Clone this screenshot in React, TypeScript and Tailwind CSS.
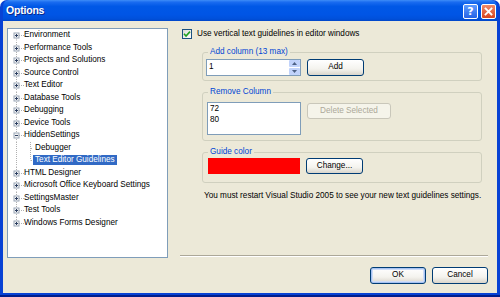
import React from 'react'

const font = "font-['Liberation_Sans',Arial,sans-serif]"

type Node = { label: string; child?: boolean; expanded?: boolean; selected?: boolean; lastChild?: boolean }

const nodes: Node[] = [
  { label: 'Environment' },
  { label: 'Performance Tools' },
  { label: 'Projects and Solutions' },
  { label: 'Source Control' },
  { label: 'Text Editor' },
  { label: 'Database Tools' },
  { label: 'Debugging' },
  { label: 'Device Tools' },
  { label: 'HiddenSettings', expanded: true },
  { label: 'Debugger', child: true },
  { label: 'Text Editor Guidelines', child: true, selected: true, lastChild: true },
  { label: 'HTML Designer' },
  { label: 'Microsoft Office Keyboard Settings' },
  { label: 'SettingsMaster' },
  { label: 'Test Tools' },
  { label: 'Windows Forms Designer' },
]

function TreeGutter({ first, last, child, expanded }: { first: boolean; last: boolean; child?: boolean; expanded?: boolean }) {
  return (
    <svg width="16" height="12.5" className="shrink-0">
      <line x1="8.5" x2="8.5" y1={first ? 6.5 : 0} y2={last ? 6.5 : 12.5} stroke="#B0B0B0" strokeDasharray="1 1" />
      {!child && (
        <>
          <line x1="11" x2="16" y1="6.5" y2="6.5" stroke="#B0B0B0" strokeDasharray="1 1" />
          <rect x="6" y="4" width="5" height="5" fill="#F4F4F4" stroke="#9AA6B6" />
          <line x1="7" x2="10" y1="6.5" y2="6.5" stroke="#2C3E60" />
          {!expanded && <line x1="8.5" x2="8.5" y1="5" y2="8" stroke="#2C3E60" />}
        </>
      )}
    </svg>
  )
}

function Tree() {
  return (
    <div className="w-[161px] h-[230px] shrink-0 bg-white border border-[#7F9DB9] flex flex-col">
      {nodes.map((n, i) => (
        <div key={n.label} className="h-[12.5px] flex items-center">
          <TreeGutter first={i === 0} last={i === nodes.length - 1} child={n.child} expanded={n.expanded} />
          {n.child && (
            <svg width="9" height="12.5" className="shrink-0">
              <line x1="6.5" x2="6.5" y1="0" y2={n.lastChild ? 6.5 : 12.5} stroke="#B0B0B0" strokeDasharray="1 1" />
              <line x1="7" x2="9" y1="6.5" y2="6.5" stroke="#B0B0B0" strokeDasharray="1 1" />
            </svg>
          )}
          <span
            className={
              n.selected
                ? 'h-[10px] leading-[10px] px-[2px] bg-[#316AC5] text-white whitespace-nowrap'
                : `h-[10px] leading-[10px] ${n.child ? 'px-[2px]' : ''} text-black whitespace-nowrap`
            }
          >
            {n.label}
          </span>
        </div>
      ))}
    </div>
  )
}

function XpButton({ children, className = '', disabled, isDefault }: { children: React.ReactNode; className?: string; disabled?: boolean; isDefault?: boolean }) {
  if (disabled) {
    return (
      <div className={`h-[16px] flex items-center justify-center rounded-[3px] border border-[#C9C7BA] bg-[#F5F4EA] text-[#ACA899] ${className}`}>
        {children}
      </div>
    )
  }
  return (
    <div
      className={`flex items-center justify-center rounded-[3px] border border-[#003C74] bg-[linear-gradient(to_bottom,#FFFFFF_0%,#F4F3EE_60%,#D9D5CB_100%)] text-black ${
        isDefault ? 'shadow-[inset_0_0_0_1px_#A6C2F2,inset_0_0_0_2px_#CFDDF7]' : ''
      } ${className}`}
    >
      {children}
    </div>
  )
}

function Group({ label, children, className = '' }: { label: string; children: React.ReactNode; className?: string }) {
  return (
    <fieldset className={`ml-[22px] w-[280px] border border-[#D0D0BF] rounded-[3px] ${className}`}>
      <legend className="ml-[5px] px-[2px] leading-[10px] text-[#0046D5]">{label}</legend>
      {children}
    </fieldset>
  )
}

function TitleBar() {
  return (
    <div className="h-[21px] shrink-0 flex items-center justify-between pl-[3px] pr-[1px] rounded-t-[6px] bg-[linear-gradient(to_bottom,#3E8DF7_0%,#1A6CF0_10%,#0058E6_30%,#0055E5_70%,#0050DA_90%,#0046C8_100%)]">
      <span className="text-white font-bold text-[10.5px] [text-shadow:1px_1px_0_#0B2A8A] tracking-[-0.2px]">
        Options
      </span>
      <div className="flex gap-[3px] pt-[1px]">
        <div className="w-[15px] h-[15px] rounded-[2px] border border-white bg-[linear-gradient(to_bottom,#5D9BFF,#2563E6)] flex items-center justify-center text-white font-bold text-[11px] leading-none font-['DejaVu_Sans',sans-serif]">
          ?
        </div>
        <div className="w-[15px] h-[15px] rounded-[2px] border border-white bg-[linear-gradient(to_bottom,#F08A6A,#D7451E)] flex items-center justify-center">
          <svg width="9" height="9" viewBox="0 0 9 9">
            <path d="M1.5 1.5 L7.5 7.5 M7.5 1.5 L1.5 7.5" stroke="#fff" strokeWidth="1.8" strokeLinecap="square" />
          </svg>
        </div>
      </div>
    </div>
  )
}

export default function App() {
  return (
    <div className={`w-[500px] h-[297px] overflow-hidden bg-white ${font} text-[8.2px]`}>
      <div className="w-full h-full flex flex-col bg-[#0842D4] rounded-t-[7px] px-[3px] pb-[4px] shadow-[inset_0_-2px_0_#001E8C]">
        <TitleBar />
        <div className="flex-1 flex flex-col bg-[#ECE9D8]">
          <div className="flex pt-[7px] pl-[4px]">
            <Tree />
            {/* right side */}
            <div className="ml-[12px] w-[308px] h-[230px] flex flex-col">
              <div className="h-[11px] flex items-center pl-[2px]">
                <div className="w-[10px] h-[10px] border border-[#1C5180] bg-[linear-gradient(135deg,#DCDCD7,#FFFFFF)] flex items-center justify-center">
                  <svg width="8" height="8" viewBox="0 0 8 8">
                    <path d="M1 3.8 L3 6 L7 1.6" stroke="#21A121" strokeWidth="1.6" fill="none" />
                  </svg>
                </div>
                <span className="ml-[5px] leading-[10px] text-black">Use vertical text guidelines in editor windows</span>
              </div>

              <Group label="Add column (13 max)" className="mt-[8px] h-[34px]">
                <div className="flex items-center pl-[3px] pt-[2px]">
                  <div className="w-[95px] h-[17px] bg-white border border-[#7F9DB9] flex items-center">
                    <span className="flex-1 pl-[2px] text-black">1</span>
                    <div className="w-[11px] h-[15px] flex flex-col gap-[1px]">
                      <div className="flex-1 rounded-[1px] bg-[#C1D3FB] flex items-center justify-center">
                        <svg width="5" height="3" viewBox="0 0 5 3"><path d="M0 3 L2.5 0 L5 3Z" fill="#4D6185" /></svg>
                      </div>
                      <div className="flex-1 rounded-[1px] bg-[#C1D3FB] flex items-center justify-center">
                        <svg width="5" height="3" viewBox="0 0 5 3"><path d="M0 0 L2.5 3 L5 0Z" fill="#4D6185" /></svg>
                      </div>
                    </div>
                  </div>
                  <XpButton className="ml-[6px] w-[57px] h-[17px]">Add</XpButton>
                </div>
              </Group>

              <Group label="Remove Column" className="mt-[6px] h-[54px]">
                <div className="flex items-start pl-[4px] pt-[5px]">
                  <div className="w-[94px] h-[33px] bg-white border border-[#7F9DB9] flex flex-col pl-[2px] pt-[1px] leading-[10.5px] text-black">
                    <span>72</span>
                    <span>80</span>
                  </div>
                  <XpButton disabled className="ml-[6px] w-[84px] mt-[1px]">Delete Selected</XpButton>
                </div>
              </Group>

              <Group label="Guide color" className="mt-[6px] h-[36px]">
                <div className="flex items-center pl-[5px] pt-[1px]">
                  <div className="w-[92px] h-[16px] bg-[#FF0000]" />
                  <XpButton className="ml-[6px] w-[57px] h-[16px]">Change...</XpButton>
                </div>
              </Group>

              <div className="mt-[8px] ml-[24px] leading-[10px] text-black whitespace-nowrap">
                You must restart Visual Studio 2005 to see your new text guidelines settings.
              </div>

              <div className="mt-auto mb-[1px] h-[2px] border-t border-[#ACA899] border-b border-b-white" />
            </div>
          </div>

          <div className="flex justify-end gap-[6px] pr-[9px] mt-[9px]">
            <XpButton isDefault className="w-[56px] h-[17px]">OK</XpButton>
            <XpButton className="w-[56px] h-[17px]">Cancel</XpButton>
          </div>
        </div>
      </div>
    </div>
  )
}
